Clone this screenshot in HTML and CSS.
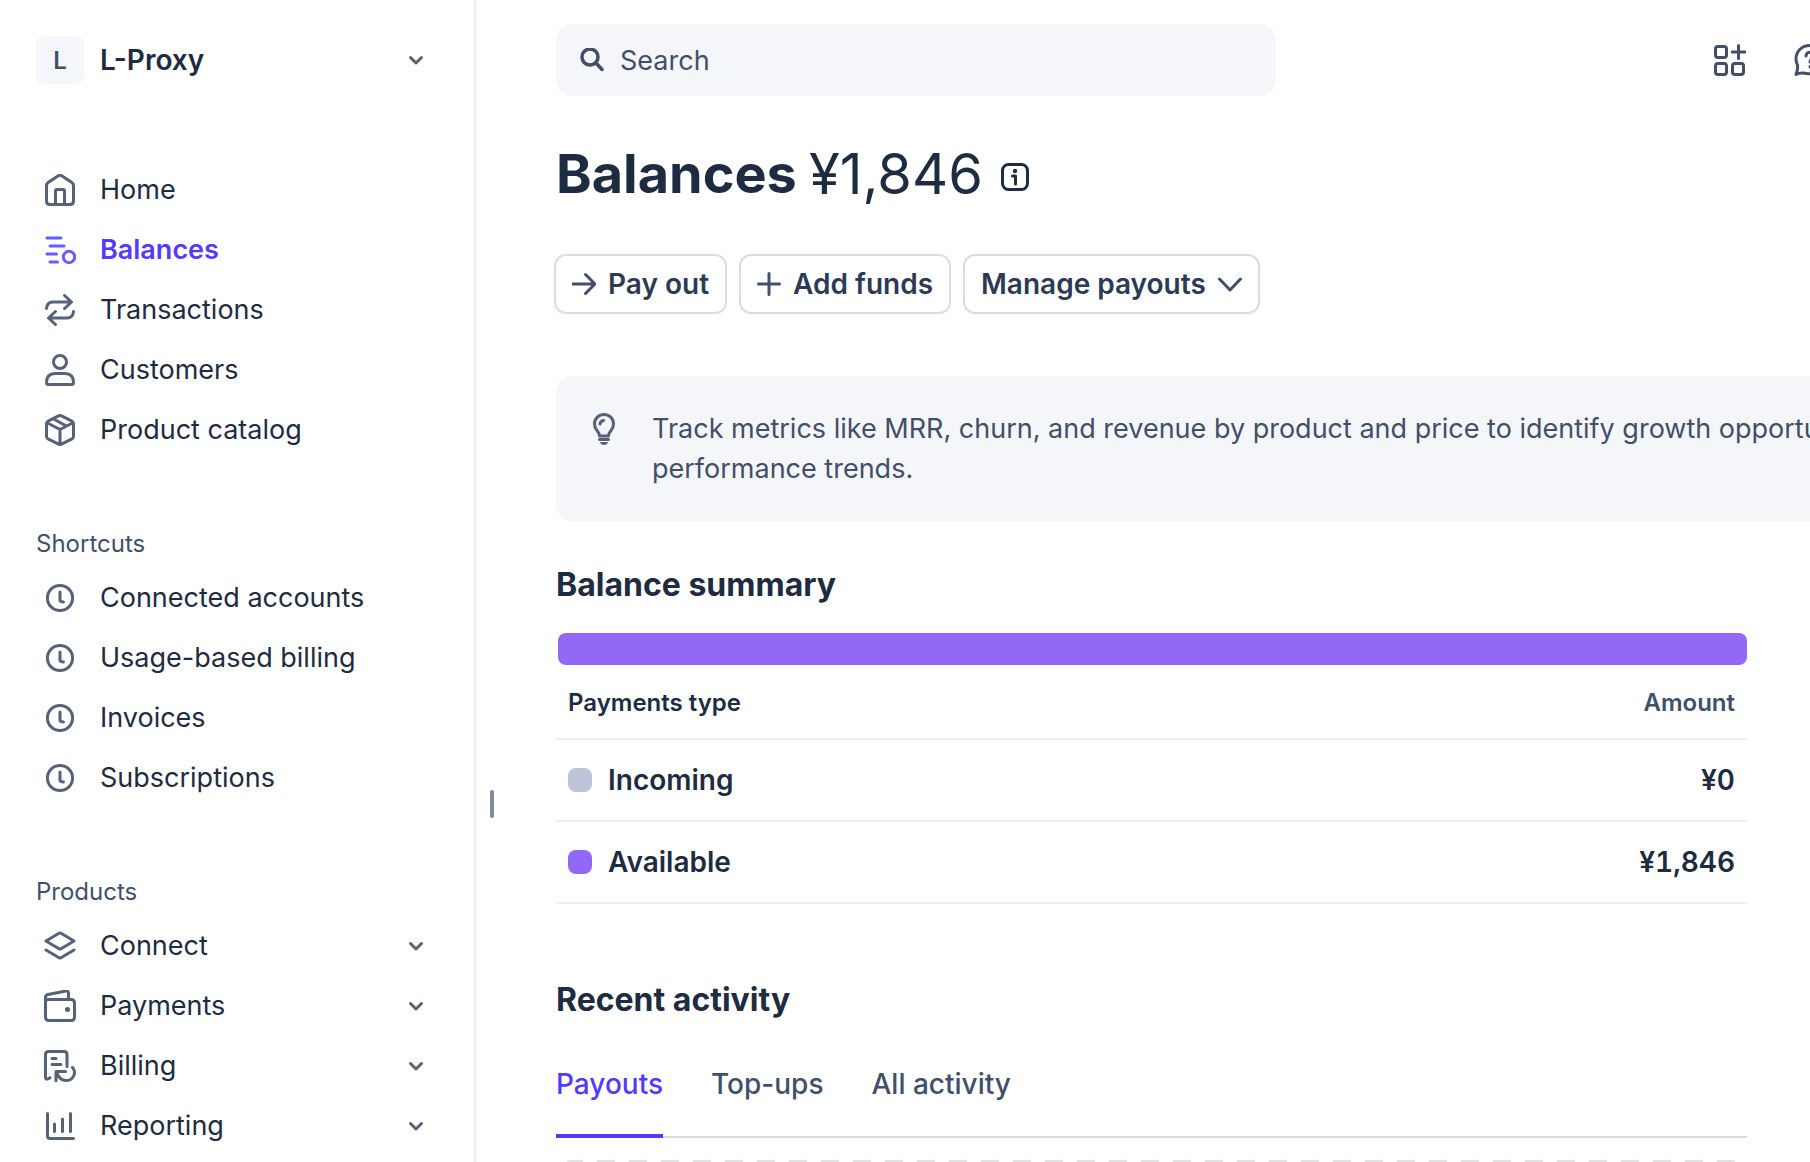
FILE: index.html
```
<!DOCTYPE html>
<html lang="en">
<head>
<meta charset="utf-8">
<title>Balances</title>
<link rel="stylesheet" href="styles.css">
</head>
<body>

<!-- shared icons -->
<svg class="sprite" aria-hidden="true">
  <symbol id="chevron" viewBox="0 0 16 16"><path d="M2.500 5.500 8 11l5.500-5.500"/></symbol>
  <symbol id="clock" viewBox="0 0 32 32"><circle cx="16" cy="16" r="12.600"/><path d="M16 10v8.200q0 1.200 1.200 1.400l2.200.4"/></symbol>
</svg>

<div class="app">

<aside class="sidebar">
  <button class="account" type="button">
    <span class="account-tile">L</span>
    <span class="account-name">L-Proxy</span>
    <svg class="chevron"><use href="#chevron"/></svg>
  </button>

  <nav class="nav">
    <a class="nav-item" href="#">
      <svg class="icon" viewBox="0 0 32 32"><path d="M2.500 11.500 Q2.500 9.500 4.100 8.500 L14.300 1.700 Q16 .800 17.700 1.700 L27.900 8.500 Q29.500 9.500 29.500 11.500 V27 Q29.500 30.600 26 30.600 H6 Q2.500 30.600 2.500 27 Z M11.500 30 V17 Q11.500 15.500 13 15.500 H19 Q20.500 15.500 20.500 17 V30"/></svg>
      <span>Home</span>
    </a>
    <a class="nav-item active" href="#">
      <svg class="icon" viewBox="0 0 32 32"><path d="M3 4H17M6 12H20M3 20H12.500M6 28H13.500"/><circle cx="25" cy="23" r="5.700"/></svg>
      <span>Balances</span>
    </a>
    <a class="nav-item" href="#">
      <svg class="icon" viewBox="0 0 32 32"><path d="M2.500 14.500 Q3 8 9 8H26M20.500 1.500 27.500 8 20.500 14.500M29.500 17.500 Q29 24 23 24H6M11.500 17.500 4.500 24 11.500 30.500"/></svg>
      <span>Transactions</span>
    </a>
    <a class="nav-item" href="#">
      <svg class="icon" viewBox="0 0 32 32"><circle cx="16" cy="8" r="6.500"/><path d="M2.500 28.500 Q2.500 19.500 11 19.500H21 Q29.500 19.500 29.500 28.500 Q29.500 30.500 27.500 30.500H4.500 Q2.500 30.500 2.500 28.500Z"/></svg>
      <span>Customers</span>
    </a>
    <a class="nav-item" href="#">
      <svg class="icon" viewBox="0 0 32 32"><path d="M14.500 1.900 Q16 1.200 17.500 1.900 L28 7.200 Q29.500 8 29.500 9.700 V22.300 Q29.500 24 28 24.800 L17.500 30.100 Q16 30.800 14.500 30.100 L4 24.800 Q2.500 24 2.500 22.300 V9.700 Q2.500 8 4 7.200Z M3.500 9 16 15.500 28.500 9M16 15.500V30M9.500 5 22 11.800"/></svg>
      <span>Product catalog</span>
    </a>
  </nav>

  <h2 class="nav-title">Shortcuts</h2>
  <nav class="nav">
    <a class="nav-item" href="#"><svg class="icon"><use href="#clock"/></svg><span>Connected accounts</span></a>
    <a class="nav-item" href="#"><svg class="icon"><use href="#clock"/></svg><span>Usage-based billing</span></a>
    <a class="nav-item" href="#"><svg class="icon"><use href="#clock"/></svg><span>Invoices</span></a>
    <a class="nav-item" href="#"><svg class="icon"><use href="#clock"/></svg><span>Subscriptions</span></a>
  </nav>

  <h2 class="nav-title">Products</h2>
  <nav class="nav">
    <a class="nav-item" href="#">
      <svg class="icon" viewBox="0 0 32 32"><path d="M15 3.200 Q16 2.600 17 3.200 L30 11 17 18.800 Q16 19.400 15 18.800 L2 11Z M2 20 15 27.800 Q16 28.400 17 27.800 L30 20"/></svg>
      <span>Connect</span><svg class="chevron"><use href="#chevron"/></svg>
    </a>
    <a class="nav-item" href="#">
      <svg class="icon" viewBox="0 0 32 32"><path d="M1.500 12 Q1.500 9.500 4 9.500H27 Q30.500 9.500 30.500 13V27 Q30.500 30.500 27 30.500H5 Q1.500 30.500 1.500 27V7.500 Q1.500 5 4 4.500L22 1 Q24.500 .800 24.500 3V9"/><circle class="dot" cx="23.500" cy="19.500" r="2.500"/></svg>
      <span>Payments</span><svg class="chevron"><use href="#chevron"/></svg>
    </a>
    <a class="nav-item" href="#">
      <svg class="icon" viewBox="0 0 32 32"><path d="M23 16.500V4.500 Q23 1.500 20 1.500H4.500 Q1.500 1.500 1.500 4.500V27.500 Q1.500 29.500 3.500 29L6 27.800M8 8.500H12M8 14.500H17M12 31V21.500H21.500M12.500 22 Q15.500 30.500 22 30.500 C29 30.500 33 23 28.500 17.500"/></svg>
      <span>Billing</span><svg class="chevron"><use href="#chevron"/></svg>
    </a>
    <a class="nav-item" href="#">
      <svg class="icon" viewBox="0 0 32 32"><path d="M3.500 3.500V26 Q3.500 28.500 6 28.500H29.500M10.500 14V21.500M18.500 9V21.500M26.500 3.500V21.500"/></svg>
      <span>Reporting</span><svg class="chevron"><use href="#chevron"/></svg>
    </a>
  </nav>
</aside>

<div class="resize-handle"></div>

<main class="main">
  <header class="topbar">
    <label class="search">
      <svg class="search-icon" viewBox="0 0 24 24"><g stroke-width="3.500"><circle cx="10" cy="9" r="8"/><path d="M16 15 22 21.500"/></g></svg>
      <input type="search" placeholder="Search" aria-label="Search">
    </label>
    <div class="topbar-actions">
      <button class="icon-button" type="button" aria-label="Apps">
        <svg class="icon" viewBox="0 0 32 32"><rect x="1.500" y="2.500" width="11" height="11" rx="2.500"/><rect x="1.500" y="19.500" width="11" height="11" rx="2.500"/><rect x="18.500" y="19.500" width="11" height="11" rx="2.500"/><path d="M24.500 1.500V14.500M18.200 8H31"/></svg>
      </button>
      <button class="icon-button" type="button" aria-label="Help">
        <svg class="icon" viewBox="0 0 32 32"><path d="M16 1.500 C7.500 1.500 2 7.500 2 15 Q2 18 3.300 20.500 Q4.500 24 2 30.500 Q6 28.500 9.500 29 C22 32 30.500 24 30.500 15.500 C30.500 7.500 24.500 1.500 16 1.500Z M12 12 C12 7 20 7 20 12 C20 15 16 14.500 16 18M16 22.500V23"/></svg>
      </button>
    </div>
  </header>

  <h1 class="page-title">
    <span>Balances</span>
    <span class="page-total">¥1,846</span>
    <svg class="info" viewBox="0 0 28 28"><rect x="1.500" y="1.500" width="25" height="25" rx="6"/><path d="M11.500 13H14.500V21"/><circle class="dot" cx="14" cy="8" r="2.200"/></svg>
  </h1>

  <div class="actions">
    <button class="button" type="button">
      <svg class="button-icon" viewBox="0 0 24 24"><path d="M1 12H22.500M13.500 2.500 23 12 13.500 21.500"/></svg>
      Pay out
    </button>
    <button class="button" type="button">
      <svg class="button-icon" viewBox="0 0 24 24"><path d="M12 1.500V22.500M1.500 12H22.500"/></svg>
      Add funds
    </button>
    <button class="button" type="button">
      Manage payouts
      <svg class="button-icon" viewBox="0 0 24 24"><path d="M1.500 7 12 18 22.500 7"/></svg>
    </button>
  </div>

  <div class="tip">
    <svg class="icon" viewBox="0 0 32 32"><path d="M11.500 23 Q11.500 20.500 9 17.500 Q6.500 14.500 6.500 11 C6.500 5.500 10.800 1.500 16 1.500 C21.200 1.500 25.500 5.500 25.500 11 Q25.500 14.500 23 17.500 Q20.500 20.500 20.500 23Z M12 11 Q12.500 8 15.500 7.500M11.500 26.500H20.500"/><path class="dot" d="M12 29H20Q19.500 32 16 32T12 29Z"/></svg>
    <p>Track metrics like MRR, churn, and revenue by product and price to identify growth opportunities and performance trends.</p>
  </div>

  <section class="summary">
    <h2 class="section-title">Balance summary</h2>
    <div class="balance-bar"></div>
    <table class="balances">
      <thead>
        <tr><th scope="col">Payments type</th><th class="amount" scope="col">Amount</th></tr>
      </thead>
      <tbody>
        <tr><td><span class="type"><i class="swatch incoming"></i>Incoming</span></td><td class="amount">¥0</td></tr>
        <tr><td><span class="type"><i class="swatch available"></i>Available</span></td><td class="amount">¥1,846</td></tr>
      </tbody>
    </table>
  </section>

  <section class="activity">
    <h2 class="section-title">Recent activity</h2>
    <div class="tabs">
      <a class="tab selected" href="#">Payouts</a>
      <a class="tab" href="#">Top-ups</a>
      <a class="tab" href="#">All activity</a>
    </div>
    <svg class="empty-state"><rect class="empty-outline" x="1" y="1" rx="16"/></svg>
  </section>
</main>

</div>
</body>
</html>
```
FILE: styles.css
```
* {
  box-sizing: border-box;
}

body {
  margin: 0;
  background: #fff;
  color: #1e2c42;
  font-family: Inter, "Liberation Sans", sans-serif;
  font-size: 27px;
  line-height: 40px;
}

h1, h2, p {
  margin: 0;
}

a {
  color: inherit;
  text-decoration: none;
}

button, input {
  border: 0;
  padding: 0;
  background: none;
  color: inherit;
  font: inherit;
}

svg {
  flex: none;
  fill: none;
  stroke: currentColor;
  stroke-width: 3;
  stroke-linecap: round;
  stroke-linejoin: round;
}

.dot {
  fill: currentColor;
  stroke: none;
}

.sprite {
  display: none;
}

.app {
  display: flex;
  height: 100vh;
  overflow: hidden;
}

/* Sidebar */

.sidebar {
  flex: none;
  width: 476px;
  padding: 36px 50px 0 36px;
  border-right: 2px solid #ebeef3;
}

.account {
  display: flex;
  align-items: center;
  gap: 16px;
  width: 100%;
  height: 48px;
  margin-bottom: 76px;
  text-align: left;
}

.account-tile {
  width: 48px;
  height: 48px;
  border-radius: 8px;
  background: #f5f6fa;
  color: #414f6a;
  font-size: 24px;
  font-weight: 600;
  line-height: 50px;
  text-align: center;
}

.account-name {
  font-size: 28px;
  font-weight: 600;
}

.nav {
  margin-bottom: 62px;
}

.nav-item {
  display: flex;
  align-items: center;
  gap: 24px;
  height: 60px;
  padding-left: 8px;
}

.icon {
  width: 32px;
  height: 32px;
  color: #56617a;
}

.chevron {
  width: 16px;
  height: 16px;
  margin-left: auto;
  color: #56617a;
}

.active {
  color: #533afd;
  font-weight: 600;
}

.active .icon {
  color: #675dff;
}

.nav-title {
  padding: 2px 0 4px;
  color: #414f6a;
  font-size: 24px;
  font-weight: 400;
  line-height: 40px;
}

.resize-handle {
  flex: none;
  align-self: center;
  width: 4px;
  height: 28px;
  margin: 446px 0 0 14px;
  border-radius: 2px;
  background: #818ba0;
}

/* Main column, wider than the window */

.main {
  flex: none;
  width: calc(100vw - 300px);
  padding: 24px 0 0 62px;
}

.topbar {
  display: flex;
  align-items: center;
  margin-bottom: 44px;
  color: #414f6a;
}

.search {
  display: flex;
  align-items: center;
  gap: 16px;
  width: 720px;
  height: 72px;
  padding: 0 24px;
  border-radius: 16px;
  background: #f5f6fa;
}

.search-icon {
  width: 24px;
  height: 24px;
}

.search input {
  flex: 1;
  padding-top: 2px;
}

.search input::placeholder {
  color: #414f6a;
  opacity: 1;
}

.topbar-actions {
  display: flex;
  gap: 48px;
  margin-left: 438px;
}

.icon-button {
  display: flex;
}

.topbar .icon {
  color: #414f6a;
}

.page-title {
  display: flex;
  align-items: center;
  gap: 12px;
  margin-bottom: 46px;
  font-size: 54px;
  font-weight: 700;
  line-height: 68px;
}

.page-total {
  font-size: 56px;
  font-weight: 400;
}

.info {
  width: 28px;
  height: 28px;
  margin: 6px 0 0 6px;
}

.actions {
  display: flex;
  gap: 12px;
  margin: 0 0 62px -2px;
}

.button {
  display: flex;
  align-items: center;
  gap: 12px;
  height: 60px;
  padding: 0 16px;
  border: 2px solid #d5dee9;
  border-radius: 12px;
  color: #2c3a55;
  font-size: 28px;
  font-weight: 600;
}

.button-icon {
  width: 24px;
  height: 24px;
  color: #414f6a;
}

.tip {
  display: flex;
  gap: 32px;
  margin-bottom: 44px;
  padding: 33px 32px 32px;
  border-radius: 16px;
  background: #f5f6fa;
  color: #414f6a;
}

.tip .icon {
  margin-top: 4px;
}

.section-title {
  font-size: 32px;
  font-weight: 700;
  line-height: 40px;
}

.summary, .activity {
  width: calc(100vw - 619px);
}

.balance-bar {
  height: 32px;
  margin: 28px 0 0 2px;
  border-radius: 8px;
  background: #9269f7;
}

.balances {
  width: 100%;
  margin-bottom: 76px;
  border-collapse: collapse;
  font-size: 28px;
  font-weight: 600;
  text-align: left;
}

.balances th,
.balances td {
  height: 82px;
  padding: 0 12px;
  border-bottom: 2px solid #ebeef3;
}

.balances th {
  height: 74px;
  padding-top: 2px;
  font-size: 24px;
  font-weight: 600;
}

.balances .amount {
  font-variant-numeric: tabular-nums;
  text-align: right;
}

.balances th.amount {
  color: #414f6a;
}

.type {
  display: flex;
  align-items: center;
  gap: 16px;
}

.swatch {
  width: 24px;
  height: 24px;
  border-radius: 8px;
}

.incoming {
  background: #bcc6d8;
}

.available {
  background: #9269f7;
}

.tabs {
  display: flex;
  gap: 48px;
  height: 118px;
  margin-bottom: 22px;
  padding-top: 44px;
  border-bottom: 2px solid #d5dee9;
  color: #414f6a;
  font-size: 28px;
  font-weight: 500;
}

.tab {
  height: 74px;
}

.selected {
  border-bottom: 4px solid #533afd;
  color: #533afd;
}

.empty-state {
  display: block;
  width: 100%;
  height: 202px;
  color: #dfe2e8;
}

.empty-outline {
  width: calc(100% - 2px);
  height: 200px;
  stroke-width: 2;
  stroke-dasharray: 18 14;
  stroke-dashoffset: 8px;
  stroke-linecap: butt;
}
```
